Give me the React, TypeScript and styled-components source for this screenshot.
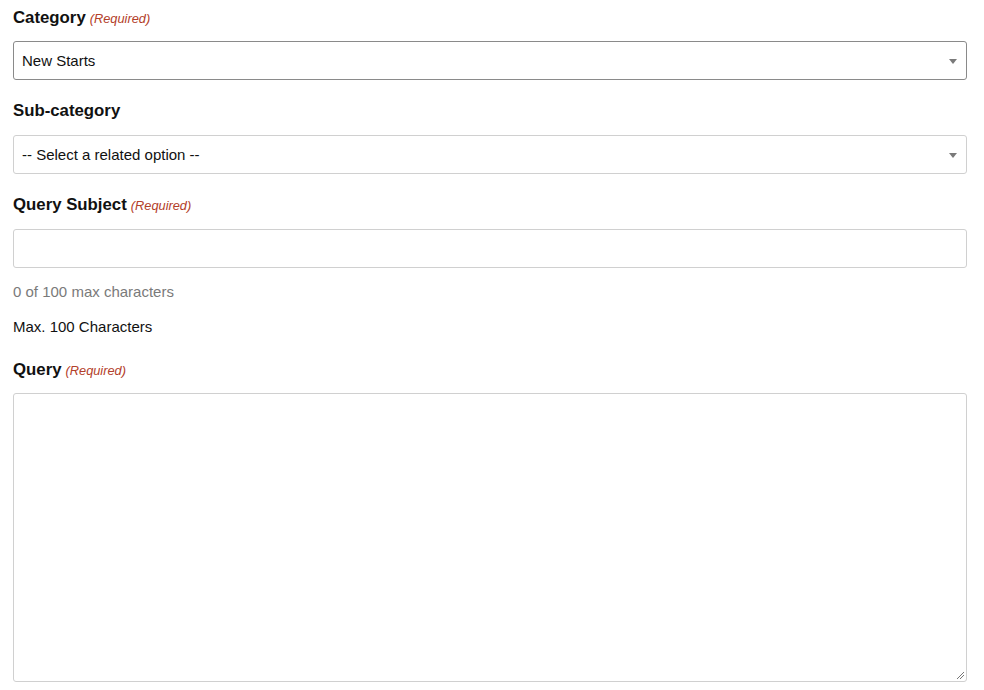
import React from "react";
import styled, { createGlobalStyle } from "styled-components";

const Global = createGlobalStyle`
  html, body { margin: 0; padding: 0; background: #fff; }
  body { font-family: "Liberation Sans", Arial, sans-serif; color: #111; }
  * { box-sizing: border-box; }
`;

const Form = styled.form`
  display: flex;
  flex-direction: column;
  padding: 8px 17px 0 13px;
`;

const Label = styled.label<{ $gap?: number; $below?: number }>`
  display: flex;
  align-items: baseline;
  gap: 4px;
  height: 20px;
  line-height: 20px;
  font-size: 16.8px;
  font-weight: bold;
  color: #111;
  margin-bottom: ${(p) => p.$below ?? 13}px;
  margin-top: ${(p) => p.$gap ?? 0}px;
`;

const Required = styled.span`
  font-size: 12.8px;
  font-style: italic;
  font-weight: normal;
  color: #b3402a;
`;

const SelectBox = styled.div<{ $dark?: boolean }>`
  position: relative;
  height: 39px;
  border: 1px solid ${(p) => (p.$dark ? "#8a8a8a" : "#d0d0d0")};
  border-radius: 3px;
  display: flex;
  align-items: center;
  padding: 0 8px;
  font-size: 15px;
  color: #111;
  background: #fff;
`;

const Arrow = styled.span`
  position: absolute;
  right: 9px;
  top: 50%;
  margin-top: -2px;
  width: 0;
  height: 0;
  border-left: 4px solid transparent;
  border-right: 4px solid transparent;
  border-top: 5px solid #7a7a7a;
`;

const TextInput = styled.div`
  height: 39px;
  border: 1px solid #d0d0d0;
  border-radius: 3px;
  background: #fff;
`;

const Hint = styled.div<{ $muted?: boolean; $gap: number }>`
  height: 20px;
  line-height: 20px;
  font-size: 15px;
  color: ${(p) => (p.$muted ? "#7a7a7a" : "#111")};
  margin-top: ${(p) => p.$gap}px;
`;

const TextArea = styled.div`
  position: relative;
  height: 289px;
  border: 1px solid #d0d0d0;
  border-radius: 3px;
  background: #fff;
`;

const Grip = styled.svg`
  position: absolute;
  right: 1px;
  bottom: 1px;
`;

export default function App() {
  return (
    <>
      <Global />
      <Form>
        <Label>
          Category <Required>(Required)</Required>
        </Label>
        <SelectBox $dark>
          New Starts
          <Arrow />
        </SelectBox>

        <Label $gap={21} $below={14}>Sub-category</Label>
        <SelectBox>
          -- Select a related option --
          <Arrow />
        </SelectBox>

        <Label $gap={21} $below={14}>
          Query Subject <Required>(Required)</Required>
        </Label>
        <TextInput />
        <Hint $muted $gap={14}>0 of 100 max characters</Hint>
        <Hint $gap={15}>Max. 100 Characters</Hint>

        <Label $gap={23}>
          Query <Required>(Required)</Required>
        </Label>
        <TextArea>
          <Grip width="10" height="10" viewBox="0 0 10 10">
            <line x1="9" y1="2" x2="2" y2="9" stroke="#777" strokeWidth="1" />
            <line x1="9" y1="5" x2="5" y2="9" stroke="#777" strokeWidth="1" />
          </Grip>
        </TextArea>
      </Form>
    </>
  );
}
